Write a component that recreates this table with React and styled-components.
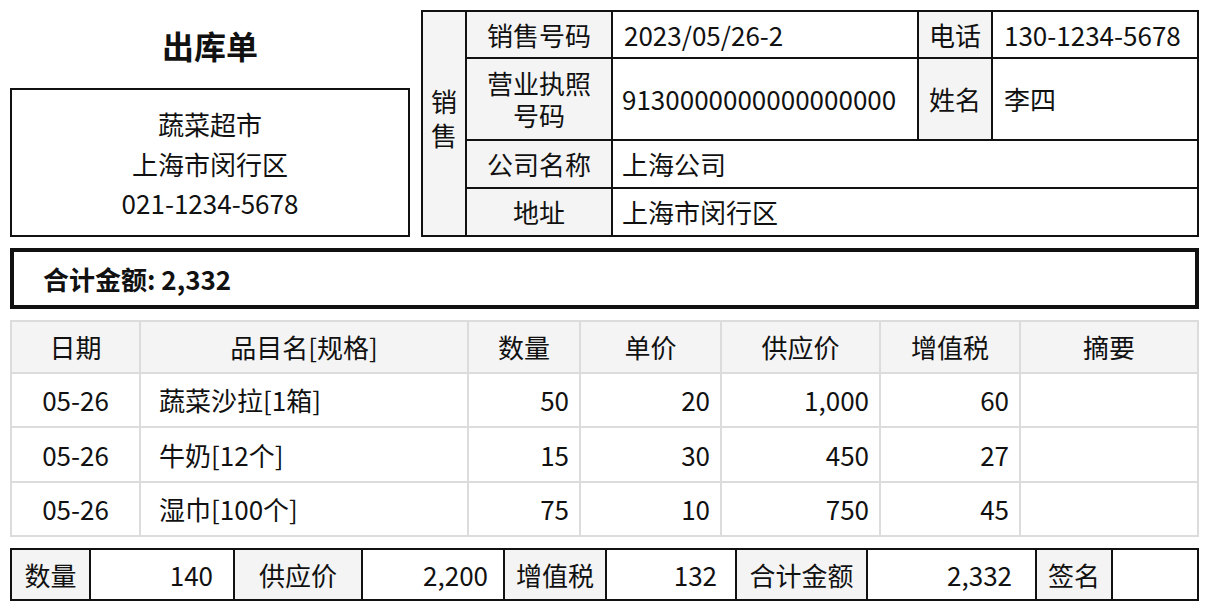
import React from 'react';
import styled, { createGlobalStyle } from 'styled-components';

const GlobalStyle = createGlobalStyle`
  body {
    margin: 0;
    background: #fff;
    color: #111;
    font-family: "Noto Sans CJK SC", "Noto Sans", sans-serif;
  }
`;

const items = [
  { date: '05-26', name: '蔬菜沙拉[1箱]', qty: '50', price: '20', supply: '1,000', tax: '60' },
  { date: '05-26', name: '牛奶[12个]', qty: '15', price: '30', supply: '450', tax: '27' },
  { date: '05-26', name: '湿巾[100个]', qty: '75', price: '10', supply: '750', tax: '45' },
];

const Page = styled.div`
  width: 1189px;
  padding: 10px;
  display: flex;
  flex-direction: column;
  gap: 11px;
  font-size: 26px;
`;

const Top = styled.div`
  display: flex;
  gap: 11px;
`;

const Shop = styled.div`
  width: 400px;
  display: flex;
  flex-direction: column;
`;

const Title = styled.h1`
  margin: 0;
  height: 78px;
  padding-bottom: 8px;
  box-sizing: border-box;
  display: flex;
  align-items: center;
  justify-content: center;
  font-size: 32px;
  font-weight: 700;
`;

const ShopBox = styled.div`
  flex: 1;
  border: 2px solid #111;
  display: flex;
  flex-direction: column;
  align-items: center;
  justify-content: center;
  padding-top: 2px;
  line-height: 39.5px;
`;

const Grid = styled.div`
  display: grid;
  grid-template-columns: ${p => p.$cols};
  grid-template-rows: ${p => p.$rows};
  border-top: 2px solid ${p => p.$line};
  border-left: 2px solid ${p => p.$line};
`;

const Cell = styled.div`
  display: flex;
  align-items: center;
  justify-content: ${p => (p.$align === 'right' ? 'flex-end' : p.$align === 'left' ? 'flex-start' : 'center')};
  text-align: ${p => p.$align || 'center'};
  padding: 0 ${p => p.$pad ?? 10}px;
  border-right: 2px solid ${p => p.$line};
  border-bottom: 2px solid ${p => p.$line};
  background: ${p => (p.$head ? '#f4f4f4' : '#fff')};
  line-height: 32px;
  white-space: ${p => (p.$wrap ? 'normal' : 'nowrap')};
  grid-column: ${p => p.$col || 'auto'};
  grid-row: ${p => p.$row || 'auto'};
`;

const Stack = styled.span`
  width: 1em;
  white-space: normal;
  line-height: 34px;
  margin-bottom: 12px;
`;

const TotalBox = styled.div`
  height: 53px;
  border: 4px solid #111;
  display: flex;
  align-items: center;
  padding-left: 29px;
  font-weight: 700;
`;

const BLACK = '#111';
const GRAY = '#dcdcdc';

export default function App() {
  return (
    <Page>
      <GlobalStyle />
      <Top>
        <Shop>
          <Title>出库单</Title>
          <ShopBox>
            <div>蔬菜超市</div>
            <div>上海市闵行区</div>
            <div>021-1234-5678</div>
          </ShopBox>
        </Shop>
        <Grid $line={BLACK} $cols="44px 146px 306px 74px 206px" $rows="47px 82px 48px 48px">
          <Cell $line={BLACK} $head $row="1 / 5" $pad={0}><Stack>销售</Stack></Cell>
          <Cell $line={BLACK} $head>销售号码</Cell>
          <Cell $line={BLACK} $align="left" $pad={11}>2023/05/26-2</Cell>
          <Cell $line={BLACK} $head $pad={0}>电话</Cell>
          <Cell $line={BLACK} $align="left" $pad={11}>130-1234-5678</Cell>
          <Cell $line={BLACK} $head $wrap>营业执照<br />号码</Cell>
          <Cell $line={BLACK} $align="left" $pad={9}>9130000000000000000</Cell>
          <Cell $line={BLACK} $head $pad={0}>姓名</Cell>
          <Cell $line={BLACK} $align="left" $pad={11}>李四</Cell>
          <Cell $line={BLACK} $head>公司名称</Cell>
          <Cell $line={BLACK} $align="left" $col="3 / 6" $pad={9}>上海公司</Cell>
          <Cell $line={BLACK} $head>地址</Cell>
          <Cell $line={BLACK} $align="left" $col="3 / 6" $pad={9}>上海市闵行区</Cell>
        </Grid>
      </Top>

      <TotalBox>合计金额: 2,332</TotalBox>

      <Grid $line={GRAY} $cols="129px 328px 112px 141px 159px 140px 178px" $rows="52px 54px 55px 54px">
        {['日期', '品目名[规格]', '数量', '单价', '供应价', '增值税', '摘要'].map(h => (
          <Cell key={h} $line={GRAY} $head>{h}</Cell>
        ))}
        {items.map((it, i) => (
          <React.Fragment key={i}>
            <Cell $line={GRAY}>{it.date}</Cell>
            <Cell $line={GRAY} $align="left" $pad={18}>{it.name}</Cell>
            <Cell $line={GRAY} $align="right">{it.qty}</Cell>
            <Cell $line={GRAY} $align="right">{it.price}</Cell>
            <Cell $line={GRAY} $align="right">{it.supply}</Cell>
            <Cell $line={GRAY} $align="right">{it.tax}</Cell>
            <Cell $line={GRAY} />
          </React.Fragment>
        ))}
      </Grid>

      <Grid $line={BLACK} $cols="79px 144px 128px 142px 102px 130px 131px 169px 76px 86px" $rows="51px">
        <Cell $line={BLACK} $head>数量</Cell>
        <Cell $line={BLACK} $align="right" $pad={20}>140</Cell>
        <Cell $line={BLACK} $head>供应价</Cell>
        <Cell $line={BLACK} $align="right" $pad={15}>2,200</Cell>
        <Cell $line={BLACK} $head>增值税</Cell>
        <Cell $line={BLACK} $align="right" $pad={18}>132</Cell>
        <Cell $line={BLACK} $head>合计金额</Cell>
        <Cell $line={BLACK} $align="right" $pad={23}>2,332</Cell>
        <Cell $line={BLACK} $head>签名</Cell>
        <Cell $line={BLACK} />
      </Grid>
    </Page>
  );
}
